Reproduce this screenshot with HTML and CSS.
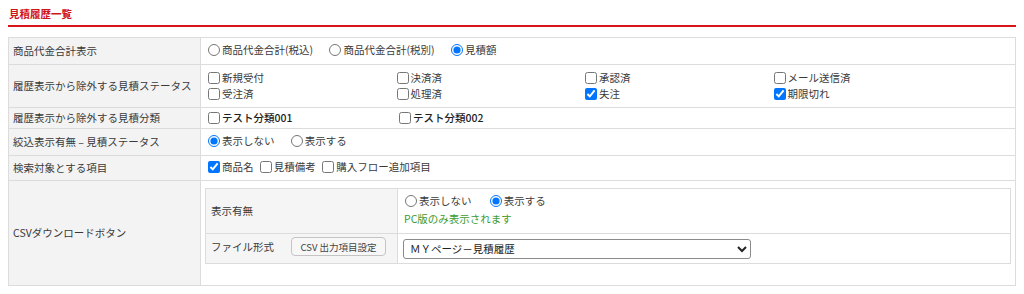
FILE: index.html
```html
<!DOCTYPE html>
<html lang="ja">
<head>
  <meta charset="UTF-8">
  <title>見積履歴一覧</title>
  <link rel="stylesheet" href="styles.css">
</head>
<body>
  <h2 class="section-title">見積履歴一覧</h2>

  <table class="setting-table">
    <tr class="row-total">
      <th>商品代金合計表示</th>
      <td>
        <label class="opt"><input type="radio" name="total">商品代金合計(税込)</label>
        <label class="opt"><input type="radio" name="total">商品代金合計(税別)</label>
        <label class="opt"><input type="radio" name="total" checked>見積額</label>
      </td>
    </tr>
    <tr class="row-status">
      <th>履歴表示から除外する見積ステータス</th>
      <td>
        <div class="check-grid">
          <label class="opt"><input type="checkbox">新規受付</label>
          <label class="opt"><input type="checkbox">決済済</label>
          <label class="opt"><input type="checkbox">承認済</label>
          <label class="opt"><input type="checkbox">メール送信済</label>
          <label class="opt"><input type="checkbox">受注済</label>
          <label class="opt"><input type="checkbox">処理済</label>
          <label class="opt"><input type="checkbox" checked>失注</label>
          <label class="opt"><input type="checkbox" checked>期限切れ</label>
        </div>
      </td>
    </tr>
    <tr class="row-category">
      <th>履歴表示から除外する見積分類</th>
      <td>
        <div class="check-grid category">
          <label class="opt"><input type="checkbox">テスト分類001</label>
          <label class="opt"><input type="checkbox">テスト分類002</label>
        </div>
      </td>
    </tr>
    <tr class="row-filter">
      <th>絞込表示有無 &#8211; 見積ステータス</th>
      <td>
        <label class="opt"><input type="radio" name="filter" checked>表示しない</label>
        <label class="opt"><input type="radio" name="filter">表示する</label>
      </td>
    </tr>
    <tr class="row-search">
      <th>検索対象とする項目</th>
      <td>
        <label class="opt tight"><input type="checkbox" checked>商品名</label>
        <label class="opt tight"><input type="checkbox">見積備考</label>
        <label class="opt tight"><input type="checkbox">購入フロー追加項目</label>
      </td>
    </tr>
    <tr class="row-csv">
      <th>CSVダウンロードボタン</th>
      <td>
        <table class="inner-table">
          <tr class="row-show">
            <th>表示有無</th>
            <td>
              <label class="opt"><input type="radio" name="csv">表示しない</label>
              <label class="opt"><input type="radio" name="csv" checked>表示する</label>
              <p class="note">PC版のみ表示されます</p>
            </td>
          </tr>
          <tr class="row-format">
            <th>
              <div class="format-head">
                <span>ファイル形式</span>
                <button type="button" class="small-btn">CSV 出力項目設定</button>
              </div>
            </th>
            <td>
              <select class="format-select">
                <option>ＭＹページ－見積履歴</option>
              </select>
            </td>
          </tr>
        </table>
      </td>
    </tr>
  </table>
</body>
</html>
```

FILE: styles.css
```css
body {
  margin: 0;
  padding: 8px;
  font-family: "Noto Sans CJK JP", "Noto Sans", sans-serif;
  font-size: 10.5px;
  color: #3a3a3a;
  background: #fff;
}
.section-title {
  margin: 0 0 10px;
  padding: 0 0 6px 1px;
  font-size: 10.5px;
  line-height: 11px;
  color: #d0121b;
  border-bottom: 2px solid #d81418;
}
.setting-table {
  width: 100%;
  border-collapse: collapse;
  border: 1px solid #dcdcdc;
}
.setting-table th,
.setting-table td {
  border: 1px solid #dcdcdc;
  padding: 2px 4px 2px 6px;
  line-height: 16px;
  text-align: left;
  font-weight: normal;
  vertical-align: middle;
}
.setting-table > tbody > tr > th {
  width: 183px;
  padding-left: 4px;
  background: #f3f3f3;
}
.row-total { height: 27px; }
.row-status { height: 43px; }
.row-category { height: 21px; }
.row-filter { height: 27px; }
.row-search { height: 25px; }
.row-csv { height: 105px; }
.row-csv > td {
  vertical-align: top;
  padding: 7px 4px 2px 4px;
}
.opt {
  display: inline-flex;
  align-items: center;
  margin-right: 13px;
  white-space: nowrap;
}
.opt.tight { margin-right: 3px; }
.opt input {
  width: 12px;
  height: 12px;
  margin: 0 2px 0 1px;
}
.check-grid {
  display: grid;
  grid-template-columns: repeat(4, 188.5px);
}
.check-grid.category {
  grid-template-columns: 191px 191px;
}
.check-grid.category .opt {
  font-weight: 500;
  color: #1e1e1e;
}
.inner-table {
  width: 100%;
  border-collapse: collapse;
  border: 1px solid #dcdcdc;
}
.setting-table .inner-table th {
  width: 182px;
  padding-left: 5px;
  background: #f5f5f5;
}
.setting-table .inner-table td {
  padding-left: 5px;
}
.row-show { height: 44px; }
.setting-table .row-show > td { padding: 4px 4px 6px 6px; }
.row-show .opt { margin-right: 15px; }
.row-format { height: 30px; }
.row-format > th {
  vertical-align: top;
  padding-top: 3px;
}
.note {
  margin: 0;
  color: #3c9a2e;
}
.format-head {
  display: flex;
  align-items: center;
  gap: 17px;
}
.small-btn {
  font-family: inherit;
  font-size: 9.5px;
  color: #444;
  background: #f7f7f7;
  border: 1px solid #c4c4c4;
  border-radius: 4px;
  height: 19px;
  width: 95px;
  padding: 0;
}
.format-select {
  font-family: inherit;
  font-size: 10.5px;
  color: #222;
  width: 348px;
  height: 20px;
  padding: 0 2px;
  border: 1px solid #8a8a8a;
  border-radius: 3px;
  background: #fff;
}
```
